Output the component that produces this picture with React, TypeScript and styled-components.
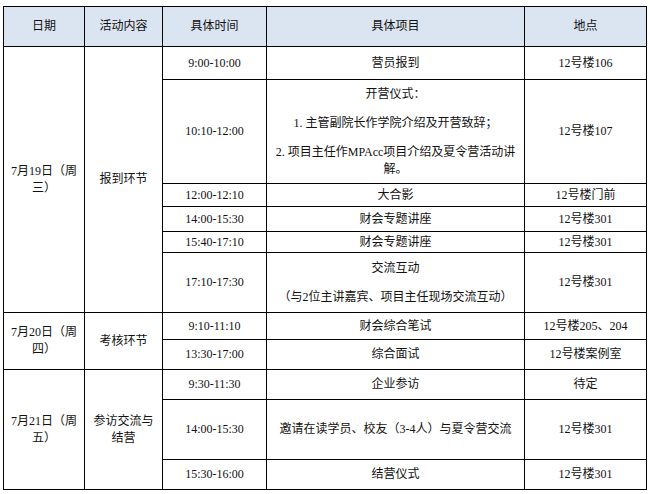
import React from 'react';
import styled, { createGlobalStyle } from 'styled-components';

const GlobalStyle = createGlobalStyle`
  html, body { margin: 0; padding: 0; background: #fff; }
  body { font-family: "Liberation Serif", "Noto Sans CJK SC", serif; }
`;

const Page = styled.div`
  padding: 6px 0 0 3px;
`;

const Table = styled.table`
  border-collapse: collapse;
  table-layout: fixed;
  width: 643px;
  font-size: 12px;
  line-height: 17px;
  color: #111;
`;

const Col = styled.col<{ $w: number }>`
  width: ${({ $w }) => $w}px;
`;

const Row = styled.tr<{ $h: number }>`
  height: ${({ $h }) => $h}px;
`;

const HeadCell = styled.th`
  background: #dbe5f1;
  border: 1px solid #000;
  font-weight: normal;
  text-align: center;
  vertical-align: middle;
  padding: 0 5px;
`;

const Cell = styled.td`
  border: 1px solid #000;
  text-align: center;
  vertical-align: middle;
  padding: 0 5px;
`;

const Para = styled.p`
  margin: 0;
  & + & { margin-top: 12px; }
`;

type Slot = { time: string; item: string[]; place: string; h: number };
type Day = { day: string; stage: string; slots: Slot[] };

const columns = [
  { title: '日期', w: 81 },
  { title: '活动内容', w: 78 },
  { title: '具体时间', w: 104 },
  { title: '具体项目', w: 258 },
  { title: '地点', w: 122 },
];

const schedule: Day[] = [
  {
    day: '7月19日（周三）',
    stage: '报到环节',
    slots: [
      { time: '9:00-10:00', item: ['营员报到'], place: '12号楼106', h: 33 },
      {
        time: '10:10-12:00',
        item: ['开营仪式：', '1. 主管副院长作学院介绍及开营致辞；', '2. 项目主任作MPAcc项目介绍及夏令营活动讲解。'],
        place: '12号楼107',
        h: 104,
      },
      { time: '12:00-12:10', item: ['大合影'], place: '12号楼门前', h: 23 },
      { time: '14:00-15:30', item: ['财会专题讲座'], place: '12号楼301', h: 25 },
      { time: '15:40-17:10', item: ['财会专题讲座'], place: '12号楼301', h: 21 },
      {
        time: '17:10-17:30',
        item: ['交流互动', '（与2位主讲嘉宾、项目主任现场交流互动）'],
        place: '12号楼301',
        h: 60,
      },
    ],
  },
  {
    day: '7月20日（周四）',
    stage: '考核环节',
    slots: [
      { time: '9:10-11:10', item: ['财会综合笔试'], place: '12号楼205、204', h: 27 },
      { time: '13:30-17:00', item: ['综合面试'], place: '12号楼案例室', h: 30 },
    ],
  },
  {
    day: '7月21日（周五）',
    stage: '参访交流与结营',
    slots: [
      { time: '9:30-11:30', item: ['企业参访'], place: '待定', h: 30 },
      { time: '14:00-15:30', item: ['邀请在读学员、校友（3-4人）与夏令营交流'], place: '12号楼301', h: 60 },
      { time: '15:30-16:00', item: ['结营仪式'], place: '12号楼301', h: 30 },
    ],
  },
];

export default function App() {
  return (
    <Page>
      <GlobalStyle />
      <Table>
        <colgroup>
          {columns.map((c) => (
            <Col key={c.title} $w={c.w} />
          ))}
        </colgroup>
        <thead>
          <Row $h={40}>
            {columns.map((c) => (
              <HeadCell key={c.title}>{c.title}</HeadCell>
            ))}
          </Row>
        </thead>
        <tbody>
          {schedule.map((d) =>
            d.slots.map((s, i) => (
              <Row key={d.day + s.time} $h={s.h}>
                {i === 0 && <Cell rowSpan={d.slots.length}>{d.day}</Cell>}
                {i === 0 && <Cell rowSpan={d.slots.length}>{d.stage}</Cell>}
                <Cell>{s.time}</Cell>
                <Cell>
                  {s.item.map((p) => (
                    <Para key={p}>{p}</Para>
                  ))}
                </Cell>
                <Cell>{s.place}</Cell>
              </Row>
            ))
          )}
        </tbody>
      </Table>
    </Page>
  );
}
